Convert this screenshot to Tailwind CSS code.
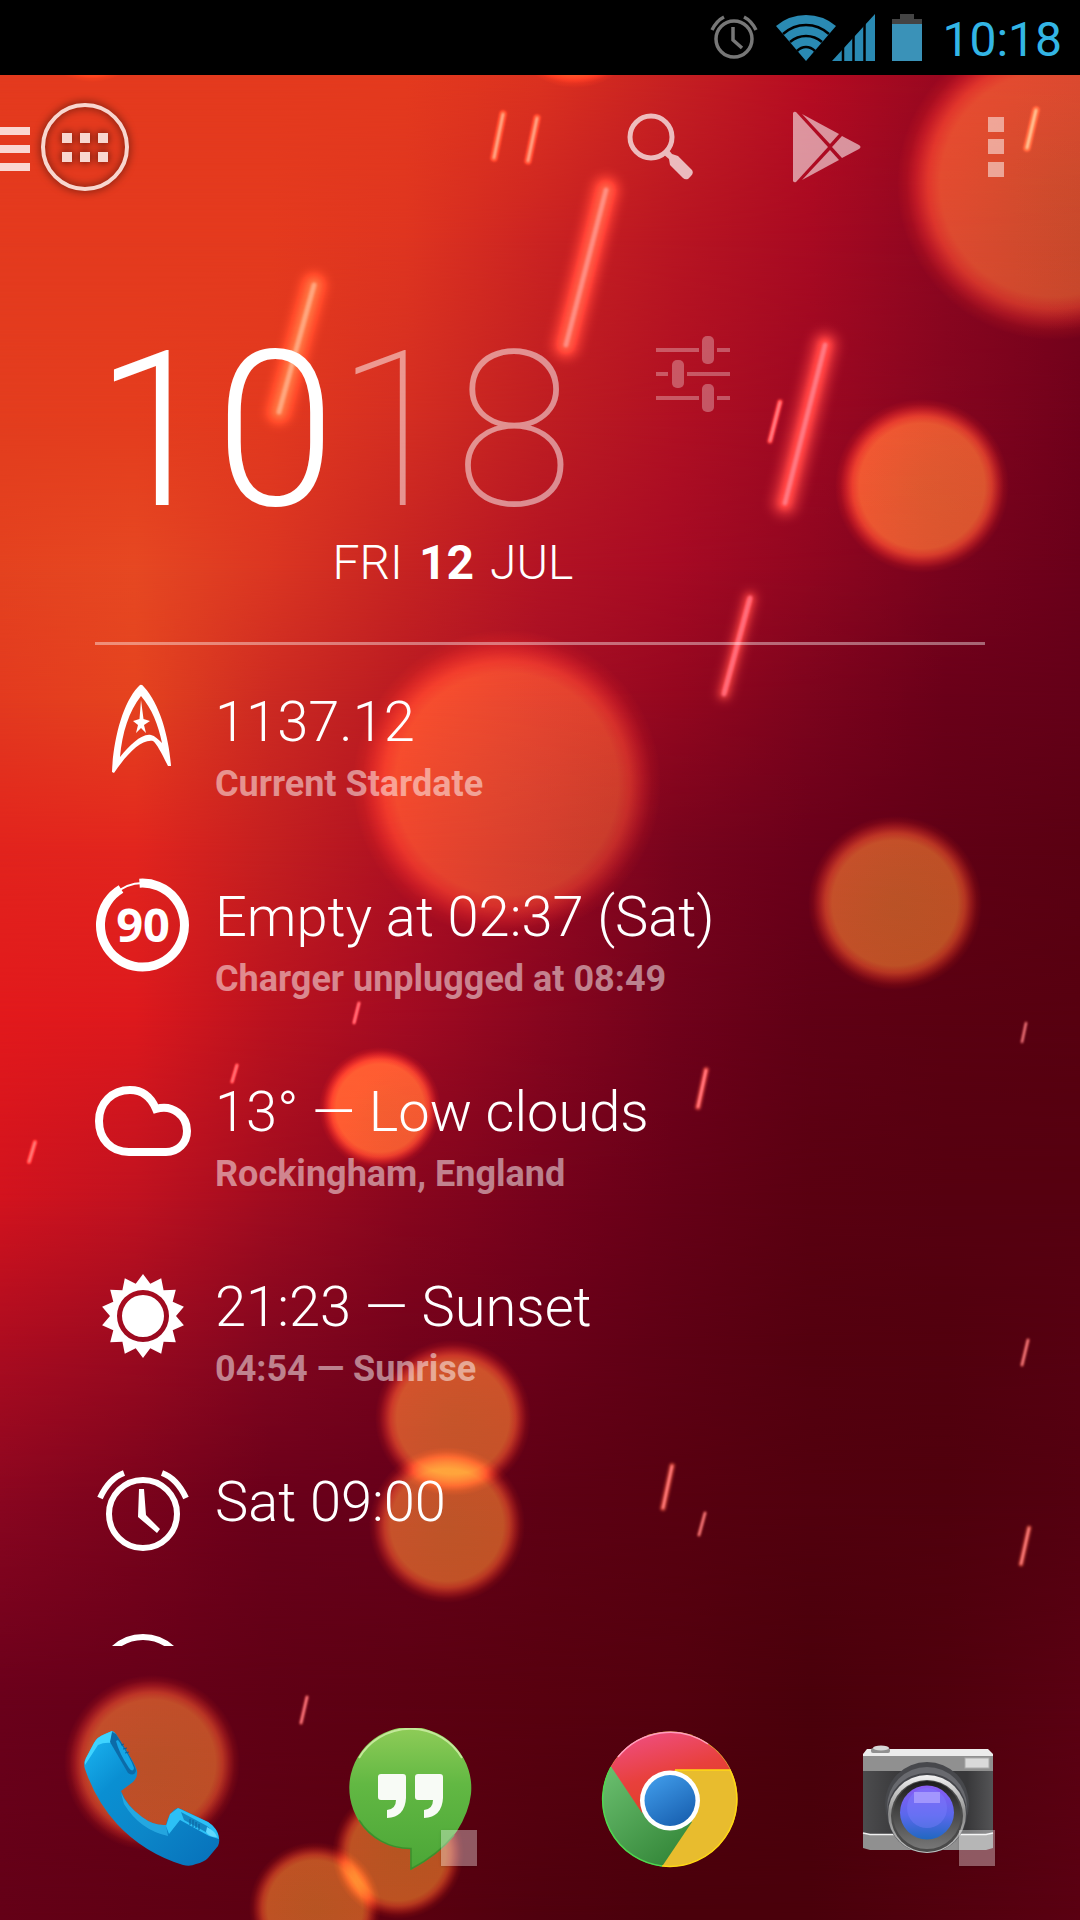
<!DOCTYPE html>
<html lang="en">
<head>
    <meta charset="UTF-8">
    <meta name="viewport" content="width=device-width, initial-scale=1.0">
    <title>Home</title>
    <script src="https://cdn.jsdelivr.net/npm/@tailwindcss/browser@4"></script>
</head>
<body class="bg-[#5a0012] font-['Roboto',sans-serif] text-white">
    <div class="relative isolate flex h-screen flex-col overflow-hidden">

        <!-- Wallpaper -->
        <svg id="wallpaper" class="absolute inset-0 -z-10 h-full w-full" viewBox="0 0 1080 1920" preserveAspectRatio="xMidYMid slice" aria-hidden="true"></svg>

        <!-- Status bar -->
        <div class="flex h-[75px] shrink-0 items-center justify-end bg-black pr-[18px]">
            <svg class="mr-[18px] h-12 w-12" viewBox="0 0 48 48" fill="none" stroke="#777" stroke-width="3.5">
                <circle cx="24" cy="25" r="18"/>
                <path d="M23 13v13l9 8"/>
                <path d="M2 16C5 10 8 6 14 3M46 16C43 10 40 6 34 3"/>
            </svg>
            <svg class="h-12 w-[60px]" viewBox="0 0 60 48">
                <path fill="#2a8ab3" d="M30 47L0 12Q13 1 30 1T60 12Z"/>
                <path fill="none" stroke="#000" stroke-width="2.5" d="M7 20Q17 11 30 11T53 20M14 28Q21 22 30 22T46 28M21 37Q25 33 30 33T39 37"/>
            </svg>
            <svg class="-ml-1 mr-4 h-12 w-11" viewBox="0 0 44 48">
                <path fill="#2a8ab3" d="M0 47L43 0V47Z"/>
                <path stroke="#000" stroke-width="2.5" d="M11 0V48M21.500 0V48M32.500 0V48"/>
            </svg>
            <svg class="mr-5 h-12 w-[30px]" viewBox="0 0 30 48">
                <path fill="#444" d="M8 0H22V5H30V11H0V5H8Z"/>
                <path fill="#3a92b8" d="M0 10H30V47H0Z"/>
            </svg>
            <span class="pt-1 text-5xl text-[#33b5e5]">10:18</span>
        </div>

        <!-- Launcher bar -->
        <header class="flex h-36 shrink-0 items-center pr-[76px]">
            <button class="pt-1" aria-label="Menu">
                <svg class="h-11 w-[30px]" viewBox="0 0 30 44" fill="#fff" fill-opacity=".8">
                    <path d="M0 0H30V8H0ZM0 18H30V26H0ZM0 36H30V44H0Z"/>
                </svg>
            </button>
            <button class="ml-2 drop-shadow-[0_0_4px_rgba(0,0,0,0.7)]" aria-label="All apps">
                <svg class="h-24 w-24" viewBox="0 0 96 96" fill="#f8d6cf">
                    <circle cx="47" cy="48" r="42" fill="none" stroke="#f8d6cf" stroke-width="4"/>
                    <path d="M24 34h10v10h-10zM42 34h10v10h-10zM60 34h10v10h-10zM24 53h10v10h-10zM42 53h10v10h-10zM60 53h10v10h-10z"/>
                </svg>
            </button>
            <button class="mr-[98px] ml-auto" aria-label="Search">
                <svg class="h-[68px] w-[68px]" viewBox="0 0 68 68" opacity=".7">
                    <circle cx="24" cy="24" r="21" fill="none" stroke="#fff" stroke-width="5"/>
                    <path fill="#fff" d="M36 41L41 36L45 41L51 43L65 57Q67 60 64 63L61 66Q58 67 56 65L43 52L42 46Z"/>
                </svg>
            </button>
            <button class="mr-[127px]" aria-label="Play Store">
                <svg class="h-[72px] w-[68px]" viewBox="0 0 68 72" fill="#fff" fill-opacity=".56">
                    <path d="M0 2Q1 0 3 1L35 36L3 71Q1 72 0 70Z"/>
                    <path d="M9 3L46 23L37 33Z"/>
                    <path d="M9 69L46 49L37 39Z"/>
                    <path d="M49 25L66 34Q69 36 66 38L49 47L39 36Z"/>
                </svg>
            </button>
            <button aria-label="More options">
                <svg class="h-[60px] w-4" viewBox="0 0 16 60" fill="#fff" fill-opacity=".5">
                    <path d="M0 0H16V15H0ZM0 22H16V37H0ZM0 45H16V60H0Z"/>
                </svg>
            </button>
        </header>

        <!-- Clock widget -->
        <section class="mx-[95px] flex h-[426px] shrink-0 items-start border-b-3 border-white/40 pt-28">
            <div class="flex flex-col items-end">
                <p class="text-[217px] leading-[200px]"><span class="font-light">10</span><span class="font-thin text-white/50">18</span></p>
                <p class="mt-1 flex gap-4 text-5xl leading-14 font-light"><span>FRI</span> <b class="font-bold">12</b> <span>JUL</span></p>
            </div>
            <button class="mt-1 ml-[83px]" aria-label="Clock settings">
                <svg class="h-20 w-[74px]" viewBox="0 0 74 80" fill="#fff" fill-opacity=".3">
                    <path d="M0 13h43v4h-43zM61 13h13v4h-13zM0 37h12v4h-12zM31 37h43v4h-43zM0 61h43v4h-43zM61 61h13v4h-13z"/>
                    <rect x="46" y="1" width="12" height="28" rx="5"/>
                    <rect x="16" y="25" width="12" height="28" rx="5"/>
                    <rect x="46" y="49" width="12" height="28" rx="5"/>
                </svg>
            </button>
        </section>

        <!-- Info list -->
        <ul class="mx-[95px] min-h-0 flex-1 overflow-hidden pt-[37px]">
            <li class="flex h-[195px] gap-6">
                <svg class="h-24 w-24" viewBox="0 0 96 96" fill="#fff" fill-rule="evenodd">
                    <path d="M45 3Q47 2 49 5C65 22 74 56 76 84L73 84C67 72 62 62 58 59C46 57 32 72 19 91L17 90C18 60 27 22 43 5ZM46 14C34 29 27 51 25 75C35 63 47 51 56 53C60 54 63 57 67 61C63 42 57 27 46 14Z"/>
                    <path d="M46 18L48.500 37L55 39L49 43L51 51L46 46L41 51L43 43L38 39L44.500 37Z"/>
                </svg>
                <div class="pt-2">
                    <p class="text-[56px] leading-16 font-light">1137.12</p>
                    <p class="mt-2 text-4xl leading-11 font-bold text-white/50">Current Stardate</p>
                </div>
            </li>
            <li class="flex h-[195px] gap-6">
                <svg class="h-24 w-24" viewBox="0 0 96 96">
                    <circle cx="48" cy="48" r="42" fill="none" stroke="#fff" stroke-width="2"/>
                    <path fill="none" stroke="#fff" stroke-width="9" d="M44.500 6.200A42 42 0 1 1 26 12"/>
                    <text x="48" y="65" text-anchor="middle" fill="#fff" class="font-['Open_Sans',sans-serif] text-[47px] font-bold">90</text>
                </svg>
                <div class="pt-2">
                    <p class="text-[56px] leading-16 font-light">Empty at 02:37 (Sat)</p>
                    <p class="mt-2 text-4xl leading-11 font-bold text-white/50">Charger unplugged at 08:49</p>
                </div>
            </li>
            <li class="flex h-[195px] gap-6">
                <svg class="h-24 w-24" viewBox="0 0 96 96" fill="none" stroke="#fff" stroke-width="8">
                    <path d="M34 80C16 80 4 67 4 49C4 31 17 18 35 18C47 18 56 25 61 37C78 32 92 44 92 59C92 71 83 80 71 80Z"/>
                </svg>
                <div class="pt-2">
                    <p class="text-[56px] leading-16 font-light">13° — Low clouds</p>
                    <p class="mt-2 text-4xl leading-11 font-bold text-white/50">Rockingham, England</p>
                </div>
            </li>
            <li class="flex h-[195px] gap-6">
                <svg class="h-24 w-24" viewBox="0 -1 96 96" fill="#fff" fill-rule="evenodd">
                    <path d="M48 6L55.300 15.800L66.200 10.200L68.600 22.200L80.800 21.800L77.700 33.700L88.900 38.700L81 48L88.900 57.300L77.700 62.300L80.800 74.200L68.600 73.800L66.200 85.800L55.300 80.200L48 90L40.700 80.200L29.800 85.800L27.400 73.800L15.200 74.200L18.300 62.300L7.100 57.300L15 48L7.100 38.700L18.300 33.700L15.200 21.800L27.400 22.200L29.800 10.200L40.700 15.800ZM22 48a26 26 0 1 0 52 0a26 26 0 1 0 -52 0ZM27 48a21 21 0 1 0 42 0a21 21 0 1 0 -42 0Z"/>
                </svg>
                <div class="pt-2">
                    <p class="text-[56px] leading-16 font-light">21:23 — Sunset</p>
                    <p class="mt-2 text-4xl leading-11 font-bold text-white/50">04:54 — Sunrise</p>
                </div>
            </li>
            <li class="flex h-[171px] gap-6">
                <svg class="h-24 w-24" viewBox="0 0 96 96" fill="none" stroke="#fff" stroke-width="6">
                    <circle cx="48" cy="52" r="34"/>
                    <path d="M5 36C11 23 18 15 29 11M91 36C85 23 78 15 67 11"/>
                    <path fill="#fff" stroke="none" d="M44 27H49L51 53L65 67L62 71L43 55Z"/>
                </svg>
                <div class="pt-2">
                    <p class="text-[56px] leading-16 font-light">Sat 09:00</p>
                </div>
            </li>
            <li class="flex">
                <svg class="h-24 w-24" viewBox="0 0 96 96" fill="none" stroke="#fff" stroke-width="6">
                    <circle cx="48" cy="47" r="43"/>
                </svg>
            </li>
        </ul>

        <!-- Dock -->
        <nav class="grid h-[274px] shrink-0 grid-cols-4 justify-items-center px-[22px] pt-[82px]">
            <button class="h-36 w-36" aria-label="Phone">
                <svg class="h-36 w-36" viewBox="0 0 144 144">
                    <defs>
                        <linearGradient id="phoneBody" x1="0" y1="0" x2="1" y2="1">
                            <stop offset="0" stop-color="#1cb8f4"/>
                            <stop offset=".3" stop-color="#0a8fd2"/>
                            <stop offset=".6" stop-color="#0c86c8"/>
                            <stop offset="1" stop-color="#0670ba"/>
                        </linearGradient>
                    </defs>
                    <path fill="url(#phoneBody)" d="M32 3L25 6Q17 9 14 15L6 30Q3 35 5 41Q16 73 37 96Q64 125 103 137Q110 139 116 136Q124 134 128 130L138 118Q141 112 137 103Q134 98 128 94L101 81Q97 79 94 82Q88 87 86 97Q74 98 62 89Q46 77 41 63L53 54Q58 49 57 43Q56 37 36 6Q34 3 32 3Z"/>
                    <path fill="#3fd4ff" d="M32 3L25 6Q17 9 14 15L6 30Q4 34 5 37L18 17Q24 14 32 15Z"/>
                    <path fill="#0c6ba8" d="M32 4L30 14L48 45Q54 49 56 43Q56 37 36 6Z"/>
                    <path fill="#15a6e6" d="M38 12Q50 28 54 40Q53 45 49 40Q39 25 36 13Z"/>
                    <path fill="#2cc0f6" d="M98 80L90 86L86 98L89 106L100 92L129 108L139 111Q138 100 128 94Z"/>
                    <path fill="#1388c4" d="M101 84L127 98Q135 104 133 108L104 92Z"/>
                    <path fill="#5fd8ff" d="M127 99Q135 103 137 109Q129 109 126 104Z"/>
                    <path fill="#35bdf0" d="M41 65Q47 78 62 89Q74 98 86 97L88 108Q60 102 44 76Z" opacity=".6"/>
                    <path fill="none" stroke="#0a5f9c" stroke-width="1" d="M110 91V97M113 92V99M116 94V100M119 96V102M41 17L44 16M43 21L47 20M45 25L49 24"/>
                </svg>
            </button>
            <button class="relative h-36 w-36" aria-label="Hangouts">
                <svg class="h-36 w-36" viewBox="0 0 144 144">
                    <defs>
                        <linearGradient id="bubble" x1="0" y1="0" x2="0" y2="1">
                            <stop offset="0" stop-color="#8fcc58"/>
                            <stop offset=".4" stop-color="#62b843"/>
                            <stop offset="1" stop-color="#4ba637"/>
                        </linearGradient>
                    </defs>
                    <path fill="url(#bubble)" d="M71.500 142V121A61 61 0 1 1 132 66Q130 84 118 103Q102 126 71.500 142Z"/>
                    <path fill="none" stroke="#c4e89a" stroke-width="2" d="M20 30A60 60 0 0 1 123 30"/>
                    <path fill="none" stroke="#3c8f2c" stroke-width="1.500" d="M20 92A60 60 0 0 0 72 120.500V141Q100 126 115 107"/>
                    <path id="quote" fill="#f8fbf6" d="M42 46H64Q67 46 67 49V70Q66 89 48 90V82Q57 81 57 72H42Q39 72 39 69V49Q39 46 42 46Z"/>
                    <use href="#quote" x="37"/>
                </svg>
                <span class="absolute right-1.5 bottom-1.5 h-9 w-9 bg-white/35 shadow"></span>
            </button>
            <button class="h-36 w-36" aria-label="Chrome">
                <svg class="h-36 w-36" viewBox="0 0 144 144">
                    <defs>
                        <linearGradient id="red" x1="0" y1="0" x2=".4" y2="1">
                            <stop offset="0" stop-color="#f0508a"/>
                            <stop offset=".6" stop-color="#e8403c"/>
                            <stop offset="1" stop-color="#e04028"/>
                        </linearGradient>
                        <linearGradient id="green" x1="0" y1="0" x2=".7" y2="1">
                            <stop offset="0" stop-color="#6cc070"/>
                            <stop offset="1" stop-color="#35883a"/>
                        </linearGradient>
                        <linearGradient id="blue" x1="0" y1="0" x2=".6" y2="1">
                            <stop offset="0" stop-color="#43a0ee"/>
                            <stop offset="1" stop-color="#1b64b4"/>
                        </linearGradient>
                    </defs>
                    <circle cx="72" cy="71" r="67.500" fill="#e8bc2e"/>
                    <path fill="url(#green)" d="M13 38.500A67.500 67.500 0 0 0 64 138.500L94 94L72 72Z"/>
                    <path fill="url(#red)" d="M13 38.500A67.500 67.500 0 0 1 132.500 42H77L44 85Z"/>
                    <path fill="none" stroke="#ffd814" stroke-width="1.500" d="M77 42H132A67 67 0 0 1 64 138"/>
                    <path fill="none" stroke="#4fd850" stroke-width="1.500" d="M64 138A67 67 0 0 1 13 39"/>
                    <path fill="none" stroke="#ff9cc0" stroke-width="1.500" d="M20 29A67 67 0 0 1 110 16"/>
                    <circle cx="72" cy="72.500" r="30" fill="#fff"/>
                    <circle cx="72" cy="72.500" r="25.500" fill="url(#blue)"/>
                </svg>
            </button>
            <button class="relative h-36 w-36" aria-label="Camera">
                <svg class="h-36 w-36" viewBox="0 0 144 144">
                    <defs>
                        <linearGradient id="ring" x1="0" y1="0" x2="0" y2="1">
                            <stop offset="0" stop-color="#f4f4f4"/>
                            <stop offset=".5" stop-color="#8a8a8a"/>
                            <stop offset="1" stop-color="#c4c4c4"/>
                        </linearGradient>
                        <linearGradient id="innerRing" x1="0" y1="0" x2="0" y2="1">
                            <stop offset="0" stop-color="#1c1c1c"/>
                            <stop offset="1" stop-color="#777"/>
                        </linearGradient>
                        <linearGradient id="glass" x1="0" y1="0" x2="0" y2="1">
                            <stop offset="0" stop-color="#8a5cf4"/>
                            <stop offset=".55" stop-color="#5a68ec"/>
                            <stop offset="1" stop-color="#2068c0"/>
                        </linearGradient>
                        <linearGradient id="leather" x1="0" y1="0" x2="1" y2="0">
                            <stop offset="0" stop-color="#4c4c4e"/>
                            <stop offset=".3" stop-color="#38383a"/>
                            <stop offset=".8" stop-color="#38383a"/>
                            <stop offset="1" stop-color="#545456"/>
                        </linearGradient>
                    </defs>
                    <path fill="url(#leather)" d="M6 40H136V108H6Z"/>
                    <path fill="#909090" d="M6 26H136V43H6Z"/>
                    <path fill="#ececec" d="M6 26L10 21H131L136 26V28H6Z"/>
                    <path fill="#909090" d="M6 105L13 107H129L136 105V120L129 122H13L6 120Z"/>
                    <path fill="none" stroke="#f0f0f0" stroke-width="1.500" d="M6 105L13 106.500H45M98 106.500H129L136 105"/>
                    <rect x="14" y="20" width="19" height="5" rx="2" fill="#909090"/>
                    <ellipse cx="24" cy="20" rx="8" ry="2.500" fill="#d8d8d8"/>
                    <rect x="108" y="30" width="24" height="10" fill="#dadada" stroke="#aaa"/>
                    <circle cx="70" cy="76" r="42" fill="#47484c"/>
                    <circle cx="70" cy="79" r="40" fill="#68696e"/>
                    <circle cx="70" cy="85" r="40" fill="#44454a"/>
                    <circle cx="70" cy="86" r="39" fill="url(#ring)"/>
                    <circle cx="70" cy="88" r="36" fill="#4a4a4a"/>
                    <circle cx="70" cy="87" r="34" fill="url(#innerRing)"/>
                    <circle cx="70" cy="84.500" r="27" fill="url(#glass)"/>
                    <circle cx="70" cy="80" r="20" fill="#7c80ff" opacity=".4"/>
                    <rect x="57" y="64" width="26" height="11" fill="#b0a4ff" opacity=".75"/>
                </svg>
                <span class="absolute right-1.5 bottom-1.5 h-9 w-9 bg-white/35 shadow"></span>
            </button>
        </nav>
    </div>

    <script>
        // Colour rows of the wallpaper: y position, then nine stops from left to right
        const rows = [
            [75, "e43a1e e43a1e e43a1e e43a1e dc3220 c62022 b60c22 980820 8a0520"],
            [240, "e43a1e e43a1e e43a1e df3520 cb2322 b81522 a80a22 8c0620 78031c"],
            [420, "e33d1e e43d1e e2391f d42e22 bf1e22 b01023 9c0822 84051f 70011b"],
            [570, "e4421f e64822 db3622 c62322 b31324 a60a24 900620 78031d 6a001a"],
            [700, "e33a1f e5431f cc2a22 b91a22 a60f24 94071f 7c041d 6a0019 640018"],
            [850, "e2231d e2251e c41f20 ad1022 960822 78041d 6a001a 600015 5a0012"],
            [1020, "e2191c dd191d b9121f a20b22 88061f 70021b 600015 5a0011 570010"],
            [1200, "d2131e c01220 a00c20 88061e 76021c 660017 5a0011 560010 560010"],
            [1350, "ab0c20 9a0a20 82061f 74021b 6a0019 5e0014 54000f 52000e 560011"],
            [1500, "8a0620 7a031c 6a001a 66001a 5e0014 580010 52000e 50000d 540010"],
            [1700, "6a001b 660019 600015 5c0012 58000f 53000e 4a000b 50000d 5a0012"],
            [1920, "640017 600014 5c0012 5a0010 50000e 4a000b 4a000b 52000e 5a0012"]
        ];

        // Glowing discs: x, y, radius with the soft edge, brightness
        const discs = [
            [92, 20, 62, 0.8], [575, 18, 70, 0.8], [1053, 184, 156, 0.84], [922, 486, 87, 1], [507, 784, 154, 0.66],
            [895, 903, 87, 0.97], [380, 1108, 61, 1], [453, 1418, 78, 1], [447, 1525, 78, 1],
            [152, 1763, 88, 0.95], [315, 1908, 66, 1], [398, 1853, 66, 1]
        ];

        // Light streaks: x1, y1, x2, y2, glow width
        const streaks = [
            [503, 114, 494, 158, 7], [537, 118, 528, 161, 7], [606, 190, 566, 345, 30],
            [314, 285, 279, 412, 26], [825, 345, 785, 503, 30], [780, 402, 770, 441, 6],
            [750, 598, 724, 694, 16], [1036, 110, 1027, 148, 7], [706, 1070, 698, 1107, 7],
            [1026, 1023, 1022, 1042, 3], [359, 1003, 354, 1023, 3], [237, 1065, 232, 1082, 3],
            [35, 1142, 29, 1162, 4], [1028, 1340, 1022, 1365, 4], [672, 1466, 663, 1508, 7],
            [705, 1513, 699, 1535, 4], [1029, 1528, 1021, 1564, 6], [307, 1697, 301, 1723, 4]
        ];

        function blur(id, deviation) {
            return `<filter id="${id}" x="0" y="0" width="1080" height="1920" filterUnits="userSpaceOnUse" color-interpolation-filters="sRGB">
                <feGaussianBlur stdDeviation="${deviation}"/>
            </filter>`;
        }

        function drawWallpaper() {
            let defs = `
                <radialGradient id="disc">
                    <stop offset="0" stop-color="#5c5411"/>
                    <stop offset=".72" stop-color="#625212"/>
                    <stop offset=".8" stop-color="#5c380e"/>
                    <stop offset=".88" stop-color="#341606"/>
                    <stop offset=".94" stop-color="#120600"/>
                    <stop offset="1" stop-color="#000"/>
                </radialGradient>` + blur("wide", 5) + blur("medium", 3) + blur("fine", 1);
            let shapes = "";

            rows.forEach(([y, colors], i) => {
                const stops = colors.split(" ").map((c, n) => `<stop offset="${n / 8}" stop-color="#${c}"/>`).join("");
                const top = i === 0 ? 0 : rows[i - 1][0];
                defs += `<linearGradient id="row${i}">${stops}</linearGradient>
                    <linearGradient id="fade${i}" gradientUnits="userSpaceOnUse" x1="0" x2="0" y1="${top}" y2="${y}">
                        <stop offset="0" stop-color="#fff" stop-opacity="${i === 0 ? 1 : 0}"/>
                        <stop offset="1" stop-color="#fff"/>
                    </linearGradient>
                    <mask id="mask${i}" maskUnits="userSpaceOnUse" x="0" y="0" width="1080" height="1920">
                        <rect y="${top}" width="1080" height="${1920 - top}" fill="url(#fade${i})"/>
                    </mask>`;
                shapes += `<rect y="${top}" width="1080" height="${1920 - top}" fill="url(#row${i})" mask="url(#mask${i})"/>`;
            });

            discs.forEach(([x, y, r, brightness]) => {
                shapes += `<circle class="mix-blend-plus-lighter" cx="${x}" cy="${y}" r="${r}" fill="url(#disc)" opacity="${brightness}"/>`;
            });

            streaks.forEach(([x1, y1, x2, y2, w]) => {
                const big = w > 10;
                const line = `class="mix-blend-plus-lighter" x1="${x1}" y1="${y1}" x2="${x2}" y2="${y2}" stroke-linecap="round"`;
                shapes += `<line ${line} stroke="${big ? "#301c10" : "#402414"}" stroke-width="${w}" filter="url(#${big ? "wide" : "fine"})"/>
                    <line ${line} stroke="#402414" stroke-width="${w / 2}" filter="url(#${big ? "medium" : "fine"})"/>
                    <line ${line} stroke="${big ? "#28303c" : "#40485c"}" stroke-width="${big ? 5 : 2}" filter="url(#fine)"/>`;
            });

            document.getElementById("wallpaper").innerHTML = `<defs>${defs}</defs>${shapes}`;
        }

        drawWallpaper();
    </script>
</body>
</html>
